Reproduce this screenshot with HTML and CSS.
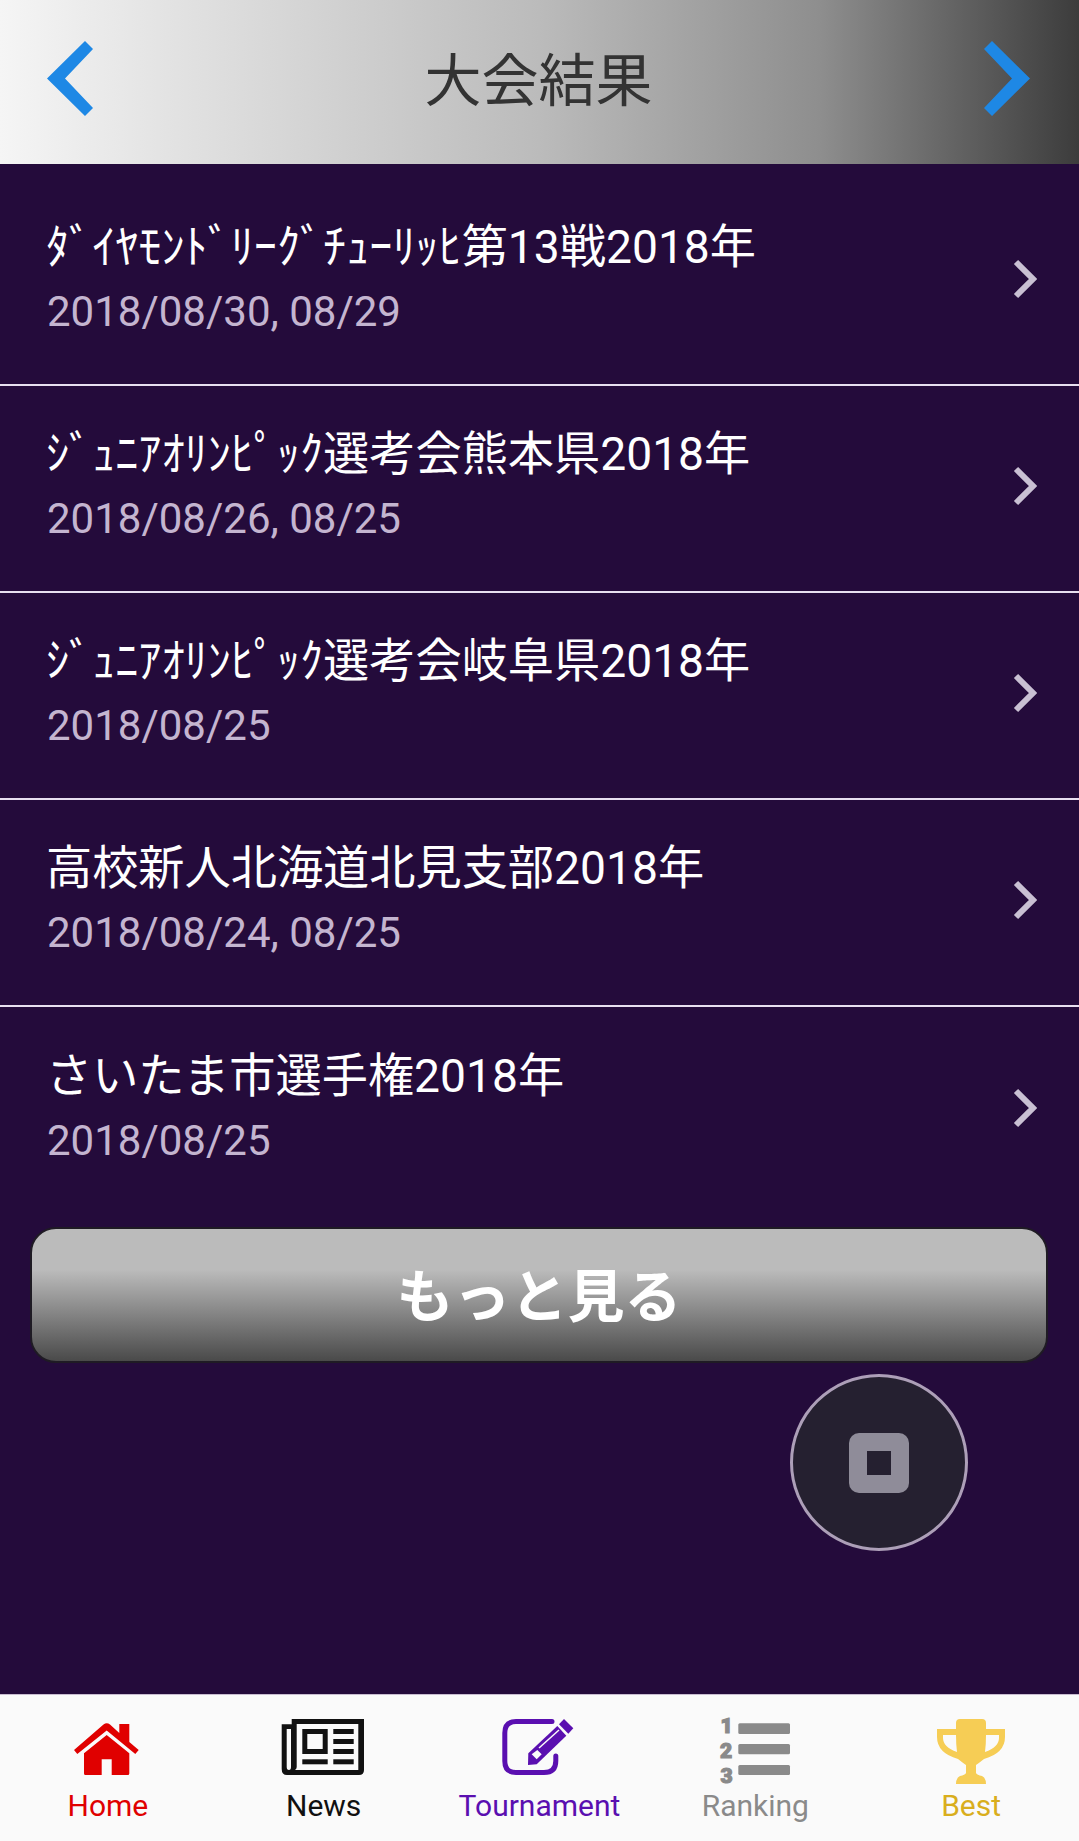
FILE: index.html
```html
<!DOCTYPE html>
<html lang="ja">
<head>
  <meta charset="UTF-8">
  <meta name="viewport" content="width=device-width, initial-scale=1.0">
  <title>大会結果</title>
  <link rel="stylesheet" href="styles.css">
</head>
<body>
  <div class="screen">
    <header class="topbar">
      <svg class="topbar-arrow" viewBox="0 0 46 75"><polygon points="38,0 46,8 18,37.500 46,67 38,75 0,37.500" class="arrow-fill"/></svg>
      <h1 class="topbar-title">大会結果</h1>
      <svg class="topbar-arrow" viewBox="0 0 46 75"><polygon points="8,0 0,8 28,37.500 0,67 8,75 46,37.500" class="arrow-fill"/></svg>
    </header>

    <main class="content">
      <ul class="result-list">
        <li class="result-row">
          <div class="result-text">
            <div class="result-name">ﾀﾞｲﾔﾓﾝﾄﾞﾘｰｸﾞﾁｭｰﾘｯﾋ第13戦2018年</div>
            <div class="result-date">2018/08/30, 08/29</div>
          </div>
          <svg class="row-chevron" viewBox="0 0 24 40"><polyline points="3,3 20,20 3,37"/></svg>
        </li>
        <li class="result-row">
          <div class="result-text">
            <div class="result-name">ｼﾞｭﾆｱｵﾘﾝﾋﾟｯｸ選考会熊本県2018年</div>
            <div class="result-date">2018/08/26, 08/25</div>
          </div>
          <svg class="row-chevron" viewBox="0 0 24 40"><polyline points="3,3 20,20 3,37"/></svg>
        </li>
        <li class="result-row">
          <div class="result-text">
            <div class="result-name">ｼﾞｭﾆｱｵﾘﾝﾋﾟｯｸ選考会岐阜県2018年</div>
            <div class="result-date">2018/08/25</div>
          </div>
          <svg class="row-chevron" viewBox="0 0 24 40"><polyline points="3,3 20,20 3,37"/></svg>
        </li>
        <li class="result-row">
          <div class="result-text">
            <div class="result-name">高校新人北海道北見支部2018年</div>
            <div class="result-date">2018/08/24, 08/25</div>
          </div>
          <svg class="row-chevron" viewBox="0 0 24 40"><polyline points="3,3 20,20 3,37"/></svg>
        </li>
        <li class="result-row">
          <div class="result-text">
            <div class="result-name">さいたま市選手権2018年</div>
            <div class="result-date">2018/08/25</div>
          </div>
          <svg class="row-chevron" viewBox="0 0 24 40"><polyline points="3,3 20,20 3,37"/></svg>
        </li>
      </ul>
      <button class="more-btn">もっと見る</button>
      <div class="float-btn"><span class="float-icon"><span class="float-hole"></span></span></div>
    </main>

    <nav class="tabbar">
      <div class="tab tab-home">
        <svg class="tab-icon" viewBox="0 0 90 76">
          <path d="M40.500 11.500 L11 37 L14.300 41 L43.700 17.500 L72.300 41 L75.700 37 L66.300 29 L66.300 11 L56.300 11 L56.300 20 L47 11.500 Q43.700 9 40.500 11.500 Z"/>
          <path fill-rule="evenodd" d="M43.700 22 L21 40.300 L21 60.500 Q21 62 22.500 62 L64.800 62 Q66.300 62 66.300 60.500 L66.300 40.300 Z M38.700 46.300 L48.700 46.300 L48.700 62 L38.700 62 Z"/>
        </svg>
        <span class="tab-label">Home</span>
      </div>
      <div class="tab tab-news">
        <svg class="tab-icon" viewBox="0 0 90 76">
          <path fill-rule="evenodd" d="M12.700 6 L85 6 L85 57 Q85 62 80 62 L8 62 Q2.700 62 2.700 56 L2.700 11.300 L12.700 11.300 Z M17.700 11 L17.700 54 Q17.700 56 16 57 L79.300 57 L79.300 11 Z M7.700 16 L7.700 54 Q7.700 57 10 57 Q12 57 12 54 L12 16 Z"/>
          <path fill-rule="evenodd" d="M23.300 16 L48.700 16 L48.700 41 L23.300 41 Z M28.300 21 L28.300 36 L43.700 36 L43.700 21 Z"/>
          <rect x="54.300" y="16" width="20.400" height="5"/>
          <rect x="54.300" y="26" width="20.400" height="5"/>
          <rect x="54.300" y="36" width="20.400" height="5"/>
          <rect x="23.300" y="46.300" width="25.400" height="5"/>
          <rect x="54.300" y="46.300" width="20.400" height="5"/>
        </svg>
        <span class="tab-label">News</span>
      </div>
      <div class="tab tab-tour">
        <svg class="tab-icon" viewBox="0 0 90 76">
          <path d="M58 8.500 L22 8.500 Q10.800 8.500 10.800 20 L10.800 48 Q10.800 59.500 22 59.500 L50 59.500 Q61.800 59.500 61.800 48 L61.800 43" class="pen-frame"/>
          <polygon points="65,11.300 70,6 79.300,15.300 74.300,20.700"/>
          <polygon points="63.300,13 72.300,22.700 42.700,51.300 34,52 34.300,40.300"/>
          <polygon points="37.700,41.300 43.300,37 47.700,41.300 42.700,46.300" class="pen-mark"/>
          <polyline points="45,35 65,17" class="pen-line"/>
        </svg>
        <span class="tab-label">Tournament</span>
      </div>
      <div class="tab tab-rank">
        <svg class="tab-icon" viewBox="0 0 90 76">
          <rect x="28.300" y="10.300" width="51.700" height="10.700" rx="1.500"/>
          <rect x="28.300" y="31" width="51.700" height="10.300" rx="1.500"/>
          <rect x="28.300" y="52" width="51.700" height="10" rx="1.500"/>
          <text x="16.500" y="20" class="rank-num">1</text>
          <text x="16" y="45" class="rank-num">2</text>
          <text x="16.500" y="70" class="rank-num">3</text>
        </svg>
        <span class="tab-label">Ranking</span>
      </div>
      <div class="tab tab-best">
        <svg class="tab-icon" viewBox="0 0 90 76">
          <path fill-rule="evenodd" d="M30 10 Q30 6 34 6 L56 6 Q60 6 60 10 L60 16 L79 16 L79 24 Q79 40 58 46 Q53 50 50 52 L50 60 Q51 62 56 63 Q60 65 60 71 L30 71 Q30 65 34 63 Q39 62 40 60 L40 52 Q37 50 32 46 Q11 40 11 24 L11 16 L30 16 Z M17 22 L17 25 Q17 34 31 39 Q30 32 30 22 Z M73 22 L60 22 Q60 32 59 39 Q73 34 73 25 Z"/>
        </svg>
        <span class="tab-label">Best</span>
      </div>
    </nav>
  </div>
</body>
</html>
```

FILE: styles.css
```css
* {
  box-sizing: border-box;
}
body {
  margin: 0;
  font-family: Roboto, "Noto Sans CJK JP", sans-serif;
  background-color: #240b3b;
}
.screen {
  width: 1079px;
  height: 1841px;
  display: flex;
  flex-direction: column;
  overflow: hidden;
}
.topbar {
  height: 164px;
  flex: none;
  display: flex;
  align-items: center;
  justify-content: space-between;
  padding: 0 49px 8px 47px;
  background: linear-gradient(to right, #f5f5f5 0%, #bbb 50%, #8e8e8e 76%, #3c3c3c 100%);
}
.topbar-arrow {
  width: 46px;
  height: 75px;
}
.arrow-fill {
  fill: #1e88e5;
}
.topbar-title {
  margin: 6px 0 0;
  font-size: 57px;
  font-weight: 400;
  color: #333;
  line-height: 1;
}
.content {
  flex: 1;
  position: relative;
  padding-top: 15px;
}
.result-list {
  list-style: none;
  margin: 0;
  padding: 0;
}
.result-row {
  height: 207px;
  display: flex;
  align-items: center;
  justify-content: space-between;
  padding: 0 42px 9px 47px;
  border-bottom: 2px solid #e8e0f0;
}
.result-row:last-child {
  border-bottom: none;
}
.result-name {
  font-size: 46.2px;
  line-height: 62px;
  margin-left: -1px;
  color: #fff;
}
.result-date {
  font-size: 42px;
  line-height: 54px;
  margin-top: 7px;
  color: #c4b5d0;
}
.row-chevron {
  width: 24px;
  height: 40px;
  margin-top: 4px;
}
.row-chevron polyline {
  fill: none;
  stroke: #c9c0d3;
  stroke-width: 6;
}
.more-btn {
  display: block;
  width: 1018px;
  height: 136px;
  margin: 13px 0 0 30px;
  padding: 0 0 6px;
  border: 2px solid #1f1b24;
  border-radius: 26px;
  background: linear-gradient(to bottom, #bbb 0%, #bbb 31%, #4a4a4a 100%);
  color: #fff;
  font-family: inherit;
  font-size: 57px;
  font-weight: 700;
}
.float-btn {
  position: absolute;
  left: 790px;
  top: 1210px;
  width: 178px;
  height: 177px;
  border-radius: 50%;
  border: 3px solid #ad9fb8;
  background-color: #252030;
  display: flex;
  align-items: center;
  justify-content: center;
}
.float-icon {
  width: 60px;
  height: 60px;
  border-radius: 10px;
  background-color: #8f8c99;
  display: flex;
  align-items: center;
  justify-content: center;
}
.float-hole {
  width: 24px;
  height: 24px;
  background-color: #252030;
}
.tabbar {
  height: 147px;
  flex: none;
  display: grid;
  grid-template-columns: repeat(5, 1fr);
  background-color: #fafafa;
  border-top: 1px solid #c8bcd0;
  padding-top: 18px;
}
.tab {
  display: flex;
  flex-direction: column;
  align-items: center;
}
.tab-icon {
  width: 90px;
  height: 76px;
  fill: currentColor;
  overflow: visible;
}
.tab-label {
  font-size: 30px;
  line-height: 36px;
  margin-top: -1px;
}
.tab-home {
  color: #e00000;
}
.tab-news {
  color: #111;
}
.tab-tour {
  color: #5a0fb0;
}
.pen-frame {
  fill: none;
  stroke: currentColor;
  stroke-width: 5;
  stroke-linecap: round;
}
.pen-mark {
  fill: #fafafa;
}
.pen-line {
  fill: none;
  stroke: #fafafa;
  stroke-width: 1.5;
}
.tab-rank {
  color: #8a8a8a;
}
.rank-num {
  font-family: Roboto, sans-serif;
  font-size: 21px;
  font-weight: 900;
  text-anchor: middle;
  stroke: currentColor;
  stroke-width: 1.2;
}
.tab-best {
  color: #d9ae1d;
}
.tab-best .tab-icon {
  fill: #f6cd55;
}
```
